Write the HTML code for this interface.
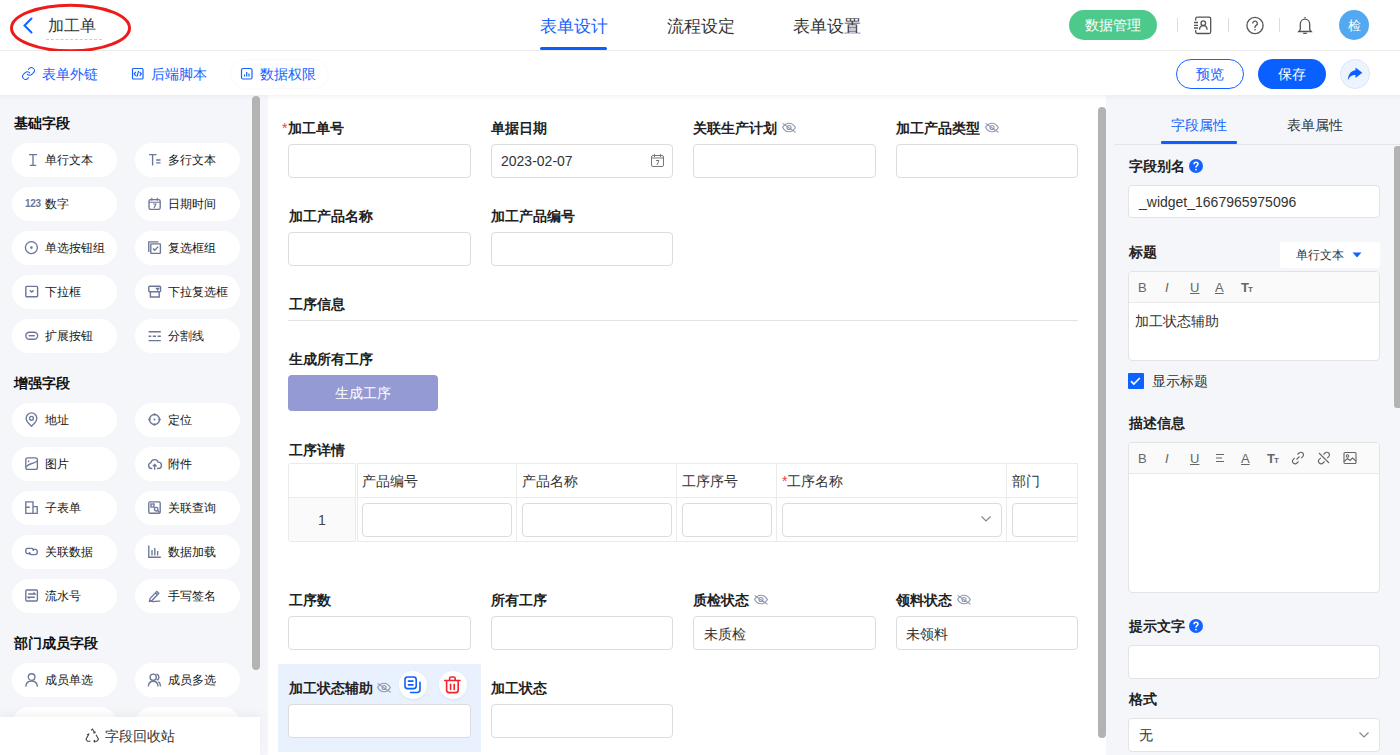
<!DOCTYPE html>
<html><head><meta charset="utf-8">
<style>
*{box-sizing:border-box;margin:0;padding:0}
html,body{width:1400px;height:755px;overflow:hidden;background:#fff;font-family:"Liberation Sans",sans-serif;color:#333}
.a{position:absolute}
.t{position:absolute;white-space:nowrap;line-height:20px}
.hdr{left:0;top:0;width:1400px;height:51px;border-bottom:1px solid #ececec;background:#fff}
.tb{left:0;top:51px;width:1400px;height:44px;background:#fff}
.lp{left:0;top:95px;width:268px;height:660px;background:#f5f6fa}
.cv{left:268px;top:95px;width:838px;height:660px;background:#fff}
.rp{left:1106px;top:95px;width:294px;height:660px;background:#f5f6fa}
.shadow{left:0;top:95px;width:1400px;height:5px;background:linear-gradient(rgba(220,223,230,.35),rgba(255,255,255,0))}
.blue{color:#1462ff}
.pill{position:absolute;width:105px;height:34px;border-radius:17px;background:#fff}
.pill .ic{position:absolute;left:13px;top:10px;width:13px;height:13px;overflow:visible}
.pill .tx{position:absolute;left:33px;top:7px;line-height:20px;font-size:12px;color:#161616;white-space:nowrap}
.sec{position:absolute;left:14px;font-size:14px;font-weight:bold;color:#111;line-height:20px}
.lbl{position:absolute;font-size:14px;font-weight:bold;color:#222;line-height:20px;white-space:nowrap}
.inp{position:absolute;width:183px;height:34px;border:1px solid #dcdcdc;border-radius:4px;background:#fff}
.star{color:#f03a3a;font-weight:normal;margin-right:1px}
</style></head><body>
<!-- header -->
<div class="a hdr"></div>
<svg class="a" style="left:22px;top:17px" width="12" height="17" viewBox="0 0 12 17"><path d="M9.5 1.5 L2.5 8.5 L9.5 15.5" fill="none" stroke="#1462ff" stroke-width="2" stroke-linecap="round"/></svg>
<div class="t" style="left:48px;top:16px;font-size:16px;line-height:20px;color:#333">加工单</div>
<div class="a" style="left:46px;top:39px;width:56px;border-top:1px dashed #ccc"></div>
<svg class="a" style="left:0;top:0" width="140" height="60"><ellipse cx="70.5" cy="28" rx="59" ry="22.8" fill="none" stroke="#ee1b1b" stroke-width="3"/></svg>

<div class="t blue" style="left:540px;top:17px;font-size:17px">表单设计</div>
<div class="a" style="left:540px;top:47px;width:67px;height:3px;border-radius:2px;background:#0d5eff"></div>
<div class="t" style="left:667px;top:17px;font-size:17px;color:#333">流程设定</div>
<div class="t" style="left:793px;top:17px;font-size:17px;color:#333">表单设置</div>

<div class="a" style="left:1069px;top:10px;width:88px;height:30px;border-radius:15px;background:#4dca8b"></div>
<div class="t" style="left:1085px;top:15px;font-size:14px;color:#fff">数据管理</div>
<div class="a" style="left:1177px;top:18px;width:1px;height:14px;background:#ddd"></div>
<div class="a" style="left:1228px;top:18px;width:1px;height:14px;background:#ddd"></div>
<div class="a" style="left:1279px;top:18px;width:1px;height:14px;background:#ddd"></div>
<svg class="a" style="left:1193px;top:16px" width="19" height="19" viewBox="0 0 19 19" fill="none" stroke="#555" stroke-width="1.3"><path d="M2.7 4.6V2.7a1.5 1.5 0 0 1 1.5-1.5h12a1.5 1.5 0 0 1 1.5 1.5v13.3a1.5 1.5 0 0 1-1.5 1.5h-12a1.5 1.5 0 0 1-1.5-1.5v-2.1"/><path d="M1 6.5h4M1 9.3h4M1 12h4"/><circle cx="10.3" cy="7.2" r="2.3"/><path d="M6.5 13.8c0-2.6 1.7-4.2 3.8-4.2s3.8 1.6 3.8 4.2"/></svg>
<svg class="a" style="left:1246px;top:16px" width="19" height="19" viewBox="0 0 19 19" fill="none" stroke="#555" stroke-width="1.3"><circle cx="9" cy="9.5" r="8.1"/><path d="M6.7 7.4a2.3 2.3 0 1 1 3.4 2c-.7.4-1.1.9-1.1 1.8v.7"/><circle cx="9" cy="13.7" r=".8" fill="#555" stroke="none"/></svg>
<svg class="a" style="left:1296px;top:16px" width="18" height="19" viewBox="0 0 18 19" fill="none" stroke="#555" stroke-width="1.3"><path d="M9 3.2c-2.7 0-4.7 2.1-4.7 5.1v5.3l-1.6 1.9h12.6l-1.6-1.9V8.3c0-3-2-5.1-4.7-5.1z"/><path d="M9 1v1.2M7.2 17.4h3.6"/></svg>
<div class="a" style="left:1339px;top:10px;width:30px;height:30px;border-radius:50%;background:#52a9f2"></div>
<div class="t" style="left:1348px;top:16px;font-size:13px;color:#fff">检</div>

<!-- toolbar -->
<div class="a tb"></div>
<svg class="a" style="left:22px;top:67px" width="13" height="13" viewBox="1 1 22 22" fill="none" stroke="#1462ff" stroke-width="1.7" stroke-linecap="round"><path d="M10 13a5 5 0 0 0 7.54.54l3-3a5 5 0 0 0-7.07-7.07l-1.72 1.71"/><path d="M14 11a5 5 0 0 0-7.54-.54l-3 3a5 5 0 0 0 7.07 7.07l1.71-1.71"/></svg>
<div class="t blue" style="left:42px;top:64px;font-size:14px">表单外链</div>
<svg class="a" style="left:131px;top:67px" width="13" height="13" viewBox="0 0 13 13" fill="none" stroke="#1462ff" stroke-width="1.2"><rect x="1.5" y="1.5" width="10.5" height="10.5" rx="1"/><path d="M4.8 8.8L3.2 6.8 4.8 4.8M8.7 4.8l1.6 2-1.6 2M7.6 3.8L5.9 9.8"/></svg>
<div class="t blue" style="left:151px;top:64px;font-size:14px">后端脚本</div>
<div class="a" style="left:230px;top:59px;width:99px;height:30px;border-radius:15px;border:1px solid #f9fafb"></div>
<svg class="a" style="left:240px;top:67px" width="13" height="13" viewBox="0 0 13 13" fill="none" stroke="#1462ff" stroke-width="1.2"><rect x="1.5" y="1.5" width="10.5" height="10.5" rx="1.5"/><path d="M4.5 9.5V7.5M6.7 9.5V5M9 9.5V6.5"/></svg>
<div class="t blue" style="left:260px;top:64px;font-size:14px">数据权限</div>

<div class="a" style="left:1176px;top:59px;width:68px;height:30px;border-radius:15px;border:1px solid #1462ff;background:#fff"></div>
<div class="t blue" style="left:1196px;top:64px;font-size:14px">预览</div>
<div class="a" style="left:1258px;top:59px;width:68px;height:30px;border-radius:15px;background:#0a5fff"></div>
<div class="t" style="left:1278px;top:64px;font-size:14px;color:#fff">保存</div>
<div class="a" style="left:1340px;top:59px;width:30px;height:30px;border-radius:50%;background:#eef4ff;border:1px solid #d9e5fd"></div>
<svg class="a" style="left:1347px;top:67px" width="16" height="14" viewBox="0 0 16 14"><path d="M8.5 0.6L15.3 5.7 8.5 11V8.1C4.8 8 2.4 9.8 0.8 13.2 1.1 7.6 4 3.6 8.5 3.3z" fill="#0b5fff"/></svg>

<!-- panels -->
<div class="a lp"></div>
<div class="a cv"></div>
<div class="a rp"></div>
<div class="a shadow"></div>
<!-- left panel -->
<div class="sec" style="top:113px">基础字段</div>
<div class="pill" style="left:12px;top:143px"><svg class="ic" viewBox="0 0 13 13" fill="none" stroke="#6c7698" stroke-width="1.35"><path d="M4 1.6h8M8 1.6v10.8M4.8 12.4h6.4"/></svg><span class="tx">单行文本</span></div>
<div class="pill" style="left:135px;top:143px"><svg class="ic" viewBox="0 0 13 13" fill="none" stroke="#6c7698" stroke-width="1.35"><path d="M1 1.6h7.5M4.6 1.6v11M8.2 7h4.3M8.2 9.8h4.3"/></svg><span class="tx">多行文本</span></div>
<div class="pill" style="left:12px;top:187px"><span class="ic" style="font-size:10px;font-weight:bold;color:#6c7698;line-height:13px;width:18px;letter-spacing:-0.3px">123</span><span class="tx">数字</span></div>
<div class="pill" style="left:135px;top:187px"><svg class="ic" viewBox="0 0 13 13" fill="none" stroke="#6c7698" stroke-width="1.35"><rect x="1" y="2.6" width="11.2" height="9.8" rx="1.6"/><path d="M1 5.2h11.2M3.8 .8v3M9.3 .8v3M5.3 7h2.6L6 11" stroke-width="1.1"/></svg><span class="tx">日期时间</span></div>
<div class="pill" style="left:12px;top:231px"><svg class="ic" viewBox="0 0 13 13" fill="none" stroke="#6c7698" stroke-width="1.35"><circle cx="6.4" cy="6.6" r="6"/><circle cx="6.4" cy="6.6" r="1.3" fill="#707a9a" stroke="none"/></svg><span class="tx">单选按钮组</span></div>
<div class="pill" style="left:135px;top:231px"><svg class="ic" viewBox="0 0 13 13" fill="none" stroke="#6c7698" stroke-width="1.35"><path d="M.8 11V.8h9.6"/><rect x="2.8" y="2.8" width="9.6" height="9.6" rx=".6"/><path d="M5 7.4l1.8 1.8 3.4-3.6"/></svg><span class="tx">复选框组</span></div>
<div class="pill" style="left:12px;top:275px"><svg class="ic" viewBox="0 0 13 13" fill="none" stroke="#6c7698" stroke-width="1.4"><rect x=".8" y="1.4" width="11.8" height="10.4" rx="1"/><path d="M4.8 5.4l1.9 1.6 1.9-1.6"/></svg><span class="tx">下拉框</span></div>
<div class="pill" style="left:135px;top:275px"><svg class="ic" viewBox="0 0 13 13" fill="none" stroke="#6c7698" stroke-width="1.4"><rect x=".8" y="1.2" width="11.8" height="5.6" rx="1"/><path d="M2.4 6.8v5.2h8.8V6.8"/><path d="M8.6 3.4h2l-1 1.4z" fill="#707a9a"/></svg><span class="tx">下拉复选框</span></div>
<div class="pill" style="left:12px;top:319px"><svg class="ic" viewBox="0 0 13 13" fill="none" stroke="#6c7698" stroke-width="1.4"><rect x=".8" y="3.2" width="11.8" height="7" rx="3.5"/><path d="M3.6 6.7h6.2"/></svg><span class="tx">扩展按钮</span></div>
<div class="pill" style="left:135px;top:319px"><svg class="ic" viewBox="0 0 13 13" fill="none" stroke="#6c7698" stroke-width="1.35"><path d="M.6 2.7h12.2M.6 7.2h2.6M4.8 7.2h3.2M9.6 7.2h3.2M.6 11.6h12.2"/></svg><span class="tx">分割线</span></div>

<div class="sec" style="top:373px">增强字段</div>
<div class="pill" style="left:12px;top:403px"><svg class="ic" viewBox="0 0 13 13" fill="none" stroke="#6c7698" stroke-width="1.35"><path d="M6.5 13.2S1.2 8.6 1.2 5.2a5.3 5.3 0 0 1 10.6 0c0 3.4-5.3 8-5.3 8z"/><circle cx="6.5" cy="5.3" r="1.9"/></svg><span class="tx">地址</span></div>
<div class="pill" style="left:135px;top:403px"><svg class="ic" viewBox="0 0 13 13" fill="none" stroke="#6c7698" stroke-width="1.35"><circle cx="6.5" cy="6.5" r="5"/><circle cx="6.5" cy="6.5" r="1" fill="#707a9a" stroke="none"/><path d="M6.5 .2v2.4M6.5 10.4v2.4M.2 6.5h2.4M10.4 6.5h2.4"/></svg><span class="tx">定位</span></div>
<div class="pill" style="left:12px;top:447px"><svg class="ic" viewBox="0 0 13 13" fill="none" stroke="#6c7698" stroke-width="1.35"><rect x=".8" y=".8" width="11.6" height="11.6" rx="2"/><path d="M1.2 10c2.5-4 5-2.2 10.8-5.8M3.6 3.6v1.6"/></svg><span class="tx">图片</span></div>
<div class="pill" style="left:135px;top:447px"><svg class="ic" viewBox="0 0 13 13" fill="none" stroke="#6c7698" stroke-width="1.35"><path d="M4.3 11.5H3.5a3 3 0 0 1-.6-5.9 3.8 3.8 0 0 1 7.3-.4 3.1 3.1 0 0 1 .2 6.3h-1.4"/><path d="M6.7 12.8V7.6M4.8 9.3l1.9-1.8 1.9 1.8"/></svg><span class="tx">附件</span></div>
<div class="pill" style="left:12px;top:491px"><svg class="ic" viewBox="0 0 13 13" fill="none" stroke="#6c7698" stroke-width="1.35"><path d="M.8 12.4V.8h7.2v11.6zM8 5.6h4.2v6.8H8M.8 6.2h4"/></svg><span class="tx">子表单</span></div>
<div class="pill" style="left:135px;top:491px"><svg class="ic" viewBox="0 0 13 13" fill="none" stroke="#6c7698" stroke-width="1.35"><rect x=".8" y=".8" width="11.4" height="11.4" rx="1.2"/><rect x="3" y="3" width="3" height="3"/><circle cx="8.2" cy="8.2" r="1.8"/><path d="M9.5 9.5l2 2"/></svg><span class="tx">关联查询</span></div>
<div class="pill" style="left:12px;top:535px"><svg class="ic" viewBox="0 0 13 13" fill="none" stroke="#6c7698" stroke-width="1.4"><path d="M5.4 8.6H2.6A1.8 1.8 0 0 1 .8 6.8V5.2a1.8 1.8 0 0 1 1.8-1.8h4a1.8 1.8 0 0 1 1.8 1.8V6"/><path d="M7.6 4.4h2.8a1.8 1.8 0 0 1 1.8 1.8v1.6a1.8 1.8 0 0 1-1.8 1.8h-4a1.8 1.8 0 0 1-1.8-1.8V7"/></svg><span class="tx">关联数据</span></div>
<div class="pill" style="left:135px;top:535px"><svg class="ic" viewBox="0 0 13 13" fill="none" stroke="#6c7698" stroke-width="1.35"><path d="M.8 .6v11.6h12M4 5v5.4M6.8 3v7.4M9.6 6v4.4"/></svg><span class="tx">数据加载</span></div>
<div class="pill" style="left:12px;top:579px"><svg class="ic" viewBox="0 0 13 13" fill="none" stroke="#6c7698" stroke-width="1.35"><rect x=".8" y="1" width="11.6" height="11" rx="1"/><path d="M3.2 5h6.8l-1.6-1.4M9.8 8.2H3l1.6 1.4"/></svg><span class="tx">流水号</span></div>
<div class="pill" style="left:135px;top:579px"><svg class="ic" viewBox="0 0 13 13" fill="none" stroke="#6c7698" stroke-width="1.35"><path d="M2.2 9.4l6.6-7 2 1.8-6.6 7.1-2.6.6zM7.4 3.9l1.9 1.8M.8 12.6c2-1.2 3.2.2 5 0s2.8-.6 6.4-.4"/></svg><span class="tx">手写签名</span></div>

<div class="sec" style="top:633px">部门成员字段</div>
<div class="pill" style="left:12px;top:663px"><svg class="ic" viewBox="0 0 13 13" fill="none" stroke="#6c7698" stroke-width="1.35"><circle cx="6.6" cy="4" r="3.3"/><path d="M.8 13.6c.3-3.6 2.6-5.6 5.8-5.6s5.5 2 5.8 5.6"/></svg><span class="tx">成员单选</span></div>
<div class="pill" style="left:135px;top:663px"><svg class="ic" viewBox="0 0 13 13" fill="none" stroke="#6c7698" stroke-width="1.35"><circle cx="5.2" cy="4.2" r="3.1"/><path d="M.3 13.4c.3-3.4 2.2-5.2 4.9-5.2s4.6 1.8 4.9 5.2M8.4 1.2a3.1 3.1 0 0 1 .3 6M10.4 8.6c1.3.8 2 2.5 2.2 4.8"/></svg><span class="tx">成员多选</span></div>
<div class="pill" style="left:12px;top:707px"></div>
<div class="pill" style="left:135px;top:707px"></div>
<div class="a" style="left:252px;top:96px;width:8px;height:574px;border-radius:4px;background:#b3b3b3"></div>
<div class="a" style="left:0;top:717px;width:260px;height:38px;background:#fff;box-shadow:0 -4px 8px rgba(0,0,0,.04)"></div>
<svg class="a" style="left:85px;top:728px" width="15" height="15" viewBox="0 0 15 15" fill="none" stroke="#444" stroke-width="1.1"><path d="M6 2.3l1.5-1.3 2.3 4M11 6.8l2.5 4.5-1.5 2H9M5.5 13.3H2.5L1 11.3l2.5-4.5M8.3 4.8l1.5.2.5-1.5M4 5.3l-.5 1.5-1.5-.3M9.5 11.8l-.5 1.5 1 1.2"/></svg>
<div class="t" style="left:105px;top:726px;font-size:14px;color:#333">字段回收站</div>
<!-- canvas -->
<div class="a" style="left:1098px;top:107px;width:8px;height:631px;border-radius:4px;background:#b3b3b3"></div>
<div class="lbl" style="left:282px;top:118px"><span class="star">*</span>加工单号</div>
<div class="inp" style="left:288px;top:144px"></div>
<div class="lbl" style="left:491px;top:118px">单据日期</div>
<div class="inp" style="left:491px;top:144px;width:182px"></div>
<div class="t" style="left:501px;top:151px;font-size:14px;color:#333">2023-02-07</div>
<svg class="a" style="left:650px;top:153px" width="15" height="15" viewBox="0 0 15 15" fill="none" stroke="#777" stroke-width="1"><rect x="1.5" y="2.5" width="12" height="11" rx="1.5"/><path d="M1.5 5h12M4.5 1v3M10.5 1v3M6 7.5h3L7 12"/></svg>
<div class="lbl" style="left:693px;top:118px">关联生产计划</div>
<svg class="a eye" style="left:781px;top:120px" width="16" height="14" viewBox="0 0 16 14" fill="none" stroke="#8d96b0" stroke-width="1.1"><path d="M1.6 7.5C3.3 4.6 5.4 3.2 8 3.2s4.7 1.4 6.4 4.3C12.7 10.4 10.6 11.8 8 11.8S3.3 10.4 1.6 7.5z"/><circle cx="8" cy="7.5" r="2"/><path d="M1.6 3.4l13 9"/></svg>
<div class="inp" style="left:693px;top:144px"></div>
<div class="lbl" style="left:896px;top:118px">加工产品类型</div>
<svg class="a eye" style="left:984px;top:120px" width="16" height="14" viewBox="0 0 16 14" fill="none" stroke="#8d96b0" stroke-width="1.1"><path d="M1.6 7.5C3.3 4.6 5.4 3.2 8 3.2s4.7 1.4 6.4 4.3C12.7 10.4 10.6 11.8 8 11.8S3.3 10.4 1.6 7.5z"/><circle cx="8" cy="7.5" r="2"/><path d="M1.6 3.4l13 9"/></svg>
<div class="inp" style="left:896px;top:144px;width:182px"></div>

<div class="lbl" style="left:289px;top:206px">加工产品名称</div>
<div class="inp" style="left:288px;top:232px"></div>
<div class="lbl" style="left:491px;top:206px">加工产品编号</div>
<div class="inp" style="left:491px;top:232px;width:182px"></div>

<div class="lbl" style="left:289px;top:294px">工序信息</div>
<div class="a" style="left:288px;top:320px;width:790px;height:1px;background:#e3e3e3"></div>

<div class="lbl" style="left:289px;top:349px">生成所有工序</div>
<div class="a" style="left:288px;top:375px;width:150px;height:36px;border-radius:4px;background:#939ad4"></div>
<div class="t" style="left:335px;top:383px;font-size:14px;color:#fff">生成工序</div>

<div class="lbl" style="left:289px;top:440px">工序详情</div>
<div class="a" style="left:288px;top:463px;width:790px;height:79px;overflow:hidden">
  <div class="a" style="left:0;top:0;width:68px;height:79px;border:1px solid #ebebeb;border-right:1px solid #ebebeb;border-radius:3px 0 0 3px"></div>
  <div class="a" style="left:1px;top:35px;width:66px;height:43px;background:#fafafa"></div>
  <div class="a" style="left:0;top:34px;width:68px;height:1px;background:#ebebeb"></div>
  <div class="t" style="left:30px;top:47px;font-size:14px;color:#444">1</div>
  <div class="a" style="left:69px;top:0;width:800px;height:79px;border:1px solid #ebebeb"></div>
  <div class="a" style="left:69px;top:34px;width:800px;height:1px;background:#ebebeb"></div>
  <div class="a" style="left:228px;top:0;width:1px;height:79px;background:#ebebeb"></div>
  <div class="a" style="left:388px;top:0;width:1px;height:79px;background:#ebebeb"></div>
  <div class="a" style="left:488px;top:0;width:1px;height:79px;background:#ebebeb"></div>
  <div class="a" style="left:718px;top:0;width:1px;height:79px;background:#ebebeb"></div>
  <div class="t" style="left:74px;top:8px;font-size:14px;color:#333">产品编号</div>
  <div class="t" style="left:234px;top:8px;font-size:14px;color:#333">产品名称</div>
  <div class="t" style="left:394px;top:8px;font-size:14px;color:#333">工序序号</div>
  <div class="t" style="left:494px;top:8px;font-size:14px;color:#333"><span style="color:#f03a3a">*</span>工序名称</div>
  <div class="t" style="left:724px;top:8px;font-size:14px;color:#333">部门</div>
  <div class="inp" style="left:74px;top:40px;width:150px;height:34px"></div>
  <div class="inp" style="left:234px;top:40px;width:150px;height:34px"></div>
  <div class="inp" style="left:394px;top:40px;width:90px;height:34px"></div>
  <div class="inp" style="left:494px;top:40px;width:220px;height:34px"></div>
  <svg class="a" style="left:692px;top:52px" width="12" height="8" viewBox="0 0 12 8" fill="none" stroke="#888" stroke-width="1.2"><path d="M1.5 1.5l4.5 4.5 4.5-4.5"/></svg>
  <div class="inp" style="left:724px;top:40px;width:150px;height:34px"></div>
  <div class="a" style="left:789px;top:0;width:1px;height:79px;background:#ebebeb"></div>
</div>

<div class="lbl" style="left:289px;top:590px">工序数</div>
<div class="inp" style="left:288px;top:616px"></div>
<div class="lbl" style="left:491px;top:590px">所有工序</div>
<div class="inp" style="left:491px;top:616px;width:182px"></div>
<div class="lbl" style="left:693px;top:590px">质检状态</div>
<svg class="a eye" style="left:753px;top:592px" width="16" height="14" viewBox="0 0 16 14" fill="none" stroke="#8d96b0" stroke-width="1.1"><path d="M1.6 7.5C3.3 4.6 5.4 3.2 8 3.2s4.7 1.4 6.4 4.3C12.7 10.4 10.6 11.8 8 11.8S3.3 10.4 1.6 7.5z"/><circle cx="8" cy="7.5" r="2"/><path d="M1.6 3.4l13 9"/></svg>
<div class="inp" style="left:693px;top:616px"></div>
<div class="t" style="left:704px;top:624px;font-size:14px;color:#333">未质检</div>
<div class="lbl" style="left:896px;top:590px">领料状态</div>
<svg class="a eye" style="left:956px;top:592px" width="16" height="14" viewBox="0 0 16 14" fill="none" stroke="#8d96b0" stroke-width="1.1"><path d="M1.6 7.5C3.3 4.6 5.4 3.2 8 3.2s4.7 1.4 6.4 4.3C12.7 10.4 10.6 11.8 8 11.8S3.3 10.4 1.6 7.5z"/><circle cx="8" cy="7.5" r="2"/><path d="M1.6 3.4l13 9"/></svg>
<div class="inp" style="left:896px;top:616px;width:182px"></div>
<div class="t" style="left:906px;top:624px;font-size:14px;color:#333">未领料</div>

<div class="a" style="left:278px;top:664px;width:203px;height:88px;background:#e9f1fe"></div>
<div class="lbl" style="left:289px;top:678px">加工状态辅助</div>
<svg class="a eye" style="left:376px;top:680px" width="16" height="14" viewBox="0 0 16 14" fill="none" stroke="#8d96b0" stroke-width="1.1"><path d="M1.6 7.5C3.3 4.6 5.4 3.2 8 3.2s4.7 1.4 6.4 4.3C12.7 10.4 10.6 11.8 8 11.8S3.3 10.4 1.6 7.5z"/><circle cx="8" cy="7.5" r="2"/><path d="M1.6 3.4l13 9"/></svg>
<div class="a" style="left:399px;top:671px;width:28px;height:28px;border-radius:50%;background:#fff;box-shadow:0 1px 3px rgba(0,0,0,.06)"></div>
<svg class="a" style="left:403px;top:675px" width="20" height="20" viewBox="0 0 20 20" fill="none" stroke="#0b5fff" stroke-width="1.6" stroke-linecap="round"><rect x="2" y="2" width="11.2" height="11.6" rx="2.6"/><path d="M5.4 6.1h4.6M5.4 9.9h4.6M17 7.2v7.3a3 3 0 0 1-3 3H7.6"/></svg>
<div class="a" style="left:439px;top:671px;width:28px;height:28px;border-radius:50%;background:#fff;box-shadow:0 1px 3px rgba(0,0,0,.06)"></div>
<svg class="a" style="left:443px;top:675px" width="20" height="20" viewBox="0 0 20 20" fill="none" stroke="#f5222d" stroke-width="1.6" stroke-linecap="round"><path d="M1.8 5.5h15.2M6.6 5.3V3.6a1.6 1.6 0 0 1 1.6-1.6h2.4a1.6 1.6 0 0 1 1.6 1.6v1.7M3.6 6.2v8.8a2.6 2.6 0 0 0 2.6 2.6h6.4a2.6 2.6 0 0 0 2.6-2.6V6.2M7.6 9.2v5.2M11.2 9.2v5.2"/></svg>
<div class="inp" style="left:288px;top:704px"></div>
<div class="lbl" style="left:491px;top:678px">加工状态</div>
<div class="inp" style="left:491px;top:704px;width:182px"></div>
<!-- right panel -->
<div class="t blue" style="left:1171px;top:115px;font-size:14px">字段属性</div>
<div class="t" style="left:1287px;top:115px;font-size:14px;color:#333">表单属性</div>
<div class="a" style="left:1114px;top:144px;width:286px;height:1px;background:#e3e5ea"></div>
<div class="a" style="left:1161px;top:141px;width:76px;height:3px;background:#0d5eff;border-radius:1px"></div>
<div class="a" style="left:1394px;top:146px;width:6px;height:262px;border-radius:3px 0 0 3px;background:#b3b3b3"></div>

<div class="lbl" style="left:1129px;top:156px">字段别名</div>
<svg class="a" style="left:1189px;top:159px" width="14" height="14" viewBox="0 0 14 14"><circle cx="7" cy="7" r="7" fill="#1462ff"/><path d="M5 5.3c0-1.2.9-2 2-2s2 .8 2 1.9c0 1.4-2 1.5-2 3v.3" fill="none" stroke="#fff" stroke-width="1.5"/><circle cx="7" cy="10.6" r=".9" fill="#fff"/></svg>
<div class="a" style="left:1128px;top:185px;width:252px;height:33px;border:1px solid #e3e3e3;border-radius:4px;background:#fff"></div>
<div class="t" style="left:1139px;top:192px;font-size:14px;color:#333">_widget_1667965975096</div>

<div class="lbl" style="left:1129px;top:242px">标题</div>
<div class="a" style="left:1280px;top:242px;width:100px;height:26px;background:#fff;border-radius:2px"></div>
<div class="t" style="left:1296px;top:245px;font-size:12px;color:#333">单行文本</div>
<svg class="a" style="left:1352px;top:252px" width="10" height="6" viewBox="0 0 10 6"><path d="M0.5 0.5h9L5 5.5z" fill="#1462ff"/></svg>

<div class="a" style="left:1128px;top:271px;width:252px;height:90px;border:1px solid #e3e3e3;border-radius:4px;background:#fff;overflow:hidden">
  <div class="a" style="left:0;top:0;width:252px;height:31px;background:#fafafa;border-bottom:1px solid #e8e8e8"></div>
</div>
<div class="t ed" style="left:1138px;top:278px;font-size:13px;color:#666">B</div>
<div class="t ed" style="left:1165px;top:278px;font-size:13px;color:#666;font-style:italic">I</div>
<div class="t ed" style="left:1190px;top:278px;font-size:13px;color:#666;text-decoration:underline">U</div>
<div class="t ed" style="left:1215px;top:278px;font-size:13px;color:#666;text-decoration:underline">A</div>
<div class="t ed" style="left:1241px;top:278px;font-size:13px;color:#666;font-weight:bold">T<span style="font-size:8px;margin-left:-1px">T</span></div>
<div class="t" style="left:1135px;top:311px;font-size:14px;color:#333">加工状态辅助</div>

<div class="a" style="left:1128px;top:373px;width:16px;height:16px;border-radius:1px;background:#0b62ff"></div>
<svg class="a" style="left:1128px;top:373px" width="16" height="16" viewBox="0 0 16 16"><path d="M3 8.2l2.8 2.8 6-6" fill="none" stroke="#fff" stroke-width="1.7"/></svg>
<div class="t" style="left:1152px;top:371px;font-size:14px;color:#333">显示标题</div>

<div class="lbl" style="left:1129px;top:413px">描述信息</div>
<div class="a" style="left:1128px;top:442px;width:252px;height:151px;border:1px solid #e3e3e3;border-radius:4px;background:#fff;overflow:hidden">
  <div class="a" style="left:0;top:0;width:252px;height:31px;background:#fafafa;border-bottom:1px solid #e8e8e8"></div>
</div>
<div class="t ed" style="left:1138px;top:449px;font-size:13px;color:#666">B</div>
<div class="t ed" style="left:1165px;top:449px;font-size:13px;color:#666;font-style:italic">I</div>
<div class="t ed" style="left:1190px;top:449px;font-size:13px;color:#666;text-decoration:underline">U</div>
<svg class="a" style="left:1214px;top:452px" width="12" height="12" viewBox="0 0 12 12" fill="none" stroke="#666" stroke-width="1.1"><path d="M2 2.5h8M2 6h6M2 9.5h8"/></svg>
<div class="t ed" style="left:1241px;top:449px;font-size:13px;color:#666;text-decoration:underline">A</div>
<div class="t ed" style="left:1267px;top:449px;font-size:13px;color:#666;font-weight:bold">T<span style="font-size:8px;margin-left:-1px">T</span></div>
<svg class="a" style="left:1291px;top:451px" width="14" height="14" viewBox="0 0 14 14" fill="none" stroke="#666" stroke-width="1.1"><path d="M5.5 8.5l3-3"/><path d="M6.5 3.5l1.5-1.5a2.6 2.6 0 0 1 3.7 3.7L10.2 7.2"/><path d="M7.5 10.5L6 12a2.6 2.6 0 0 1-3.7-3.7L3.8 6.8"/></svg>
<svg class="a" style="left:1317px;top:451px" width="14" height="14" viewBox="0 0 14 14" fill="none" stroke="#666" stroke-width="1.1"><path d="M6.5 3.5l1.5-1.5a2.6 2.6 0 0 1 3.7 3.7L10.2 7.2"/><path d="M7.5 10.5L6 12a2.6 2.6 0 0 1-3.7-3.7L3.8 6.8M2 2l10 10"/></svg>
<svg class="a" style="left:1343px;top:451px" width="14" height="14" viewBox="0 0 14 14" fill="none" stroke="#666" stroke-width="1.1"><rect x="1" y="1.5" width="12" height="11" rx="1"/><circle cx="4.5" cy="5" r="1.2"/><path d="M1 10.5l3.5-3 2.5 2 2.5-2.5 3.5 3"/></svg>

<div class="lbl" style="left:1129px;top:616px">提示文字</div>
<svg class="a" style="left:1189px;top:619px" width="14" height="14" viewBox="0 0 14 14"><circle cx="7" cy="7" r="7" fill="#1462ff"/><path d="M5 5.3c0-1.2.9-2 2-2s2 .8 2 1.9c0 1.4-2 1.5-2 3v.3" fill="none" stroke="#fff" stroke-width="1.5"/><circle cx="7" cy="10.6" r=".9" fill="#fff"/></svg>
<div class="a" style="left:1128px;top:645px;width:252px;height:34px;border:1px solid #e3e3e3;border-radius:4px;background:#fff"></div>

<div class="lbl" style="left:1129px;top:689px">格式</div>
<div class="a" style="left:1128px;top:718px;width:252px;height:34px;border:1px solid #e3e3e3;border-radius:4px;background:#fff"></div>
<div class="t" style="left:1139px;top:725px;font-size:14px;color:#333">无</div>
<svg class="a" style="left:1358px;top:731px" width="12" height="8" viewBox="0 0 12 8" fill="none" stroke="#888" stroke-width="1.2"><path d="M1.5 1.5l4.5 4.5 4.5-4.5"/></svg>
</body></html>
